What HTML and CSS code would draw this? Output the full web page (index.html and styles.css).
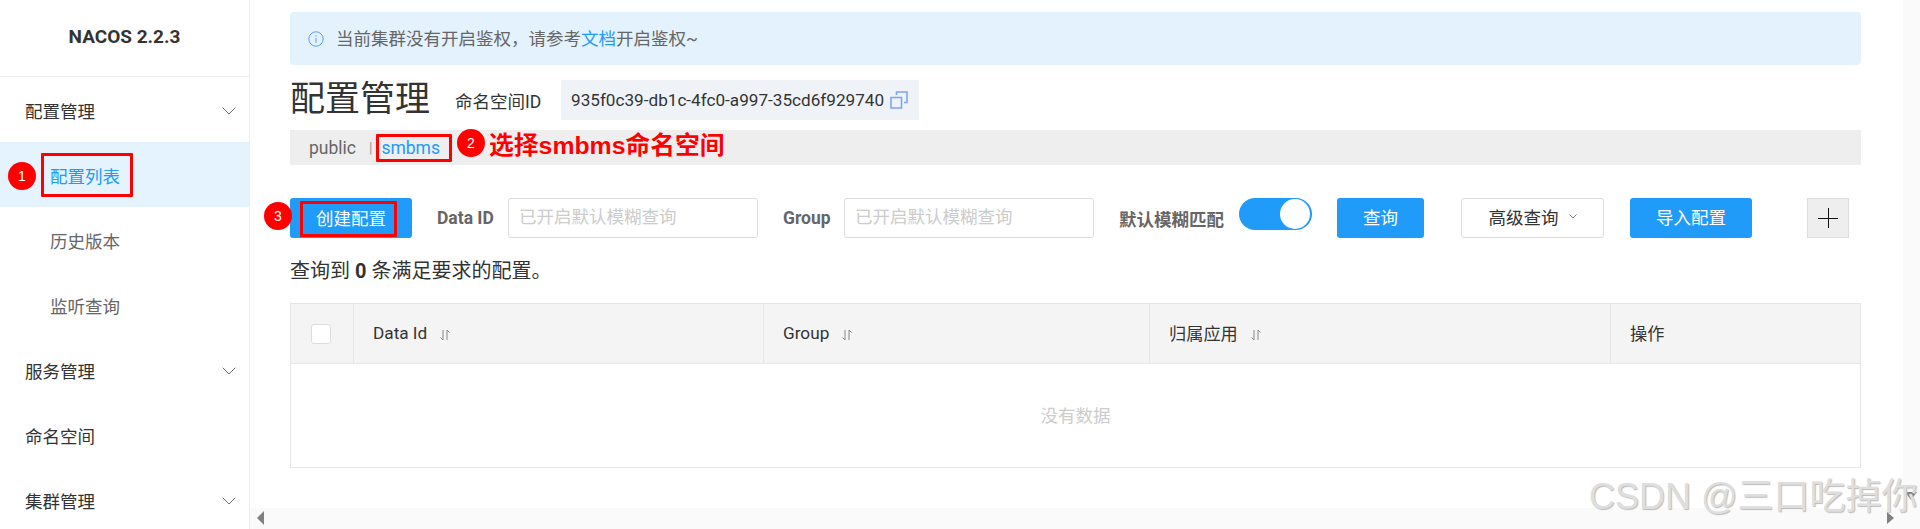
FILE: index.html
```html
<!DOCTYPE html>
<html lang="zh-CN">
<head>
<meta charset="utf-8">
<title>NACOS 2.2.3</title>
<link rel="stylesheet" href="styles.css">
</head>
<body>
<div class="app">
  <aside class="sidebar">
    <div class="brand">NACOS 2.2.3</div>
    <nav class="menu">
      <div class="menu-item"><span>配置管理</span><svg class="chev" viewBox="0 0 14 8"><path d="M.7.7 7 7 13.3.7"/></svg></div>
      <div class="menu-item sub active"><span class="mark-box nav-box">配置列表</span><span class="badge badge-nav">1</span></div>
      <div class="menu-item sub">历史版本</div>
      <div class="menu-item sub">监听查询</div>
      <div class="menu-item"><span>服务管理</span><svg class="chev" viewBox="0 0 14 8"><path d="M.7.7 7 7 13.3.7"/></svg></div>
      <div class="menu-item"><span>命名空间</span></div>
      <div class="menu-item"><span>集群管理</span><svg class="chev" viewBox="0 0 14 8"><path d="M.7.7 7 7 13.3.7"/></svg></div>
    </nav>
  </aside>

  <main class="main">
    <div class="notice">
      <svg class="info" viewBox="0 0 16 16"><circle cx="8" cy="8" r="7.2"/><path d="M8 4.2v1.4M8 7v5"/></svg>
      <span class="notice-text">当前集群没有开启鉴权，请参考<a class="link">文档</a>开启鉴权~</span>
    </div>

    <div class="title-row">
      <h1 class="title">配置管理</h1>
      <span class="ns-label">命名空间ID</span>
      <div class="ns-id">
        <span>935f0c39-db1c-4fc0-a997-35cd6f929740</span>
        <svg class="copy" viewBox="0 0 18 18"><path d="M1 6.500h10.500V17H1zM6.500 4V1H17v10.500h-3"/></svg>
      </div>
    </div>

    <div class="tabs">
      <span class="tab">public</span>
      <span class="tab-sep">|</span>
      <span class="mark-box tab-box">smbms</span>
      <span class="badge badge-tab">2</span>
      <span class="callout">选择smbms命名空间</span>
    </div>

    <div class="toolbar">
      <button class="btn primary create"><span class="btn-text mark-box create-box">创建配置</span><span class="badge badge-create">3</span></button>
      <label class="field-label label-id">Data ID</label>
      <div class="input">已开启默认模糊查询</div>
      <label class="field-label label-group">Group</label>
      <div class="input">已开启默认模糊查询</div>
      <label class="field-label label-fuzzy">默认模糊匹配</label>
      <div class="switch"><span class="knob"></span></div>
      <button class="btn primary query"><span class="btn-text">查询</span></button>
      <button class="btn normal advanced"><span class="btn-text">高级查询</span><svg class="mini-chev" viewBox="0 0 8 5"><path d="M.5.5 4 4 7.500.5"/></svg></button>
      <button class="btn primary import"><span class="btn-text">导入配置</span></button>
      <button class="plus"><svg viewBox="0 0 20 20"><path d="M10.500 0v20M0 10.500h20"/></svg></button>
    </div>

    <p class="result">查询到 <strong>0</strong> 条满足要求的配置。</p>

    <div class="table">
      <div class="thead">
        <div class="th th-check"><span class="checkbox"></span></div>
        <div class="th">Data Id<svg class="sort" viewBox="0 0 12 12"><path d="M4 1v10L1.500 8.500M8 11V1l2.500 2.500"/></svg></div>
        <div class="th">Group<svg class="sort" viewBox="0 0 12 12"><path d="M4 1v10L1.500 8.500M8 11V1l2.500 2.500"/></svg></div>
        <div class="th">归属应用<svg class="sort" viewBox="0 0 12 12"><path d="M4 1v10L1.500 8.500M8 11V1l2.500 2.500"/></svg></div>
        <div class="th">操作</div>
      </div>
      <div class="empty">没有数据</div>
    </div>

    <div class="hscroll"><span class="arrow-left"></span><span class="arrow-right"></span></div>
  </main>
  <div class="vscroll"><span class="arrow-down"></span></div>
  <div class="watermark">CSDN @三口吃掉你</div>
</div>
</body>
</html>
```
FILE: styles.css
```css
* { box-sizing: border-box; }
html, body { margin: 0; padding: 0; background: #fff; }
body {
  width: 1920px; height: 529px; overflow: hidden;
  font-family: Roboto, "Noto Sans CJK SC", sans-serif;
  font-size: 17.5px; color: #333;
}
.app { position: relative; display: flex; width: 1920px; height: 529px; overflow: hidden; }

.sidebar { width: 250px; flex: none; border-right: 1px solid #eee; height: 529px; overflow: hidden; }
.brand {
  height: 77px; border-bottom: 1px solid #eee;
  display: flex; align-items: center; justify-content: center;
  font-size: 19px; font-weight: 700; padding-bottom: 3px;
}
.menu-item {
  position: relative; height: 65px; padding: 2px 13px 0 25px;
  display: flex; align-items: center; justify-content: space-between; color: #333; white-space: nowrap;
}
.menu-item.sub { padding-left: 50px; color: #666; justify-content: flex-start; }
.menu-item.active { background: #e4f3fe; color: #209bfa; }
.chev { width: 14px; height: 8px; fill: none; stroke: #6b6f73; stroke-width: 1; }

.mark-box { position: relative; }
.mark-box::after {
  content: ""; position: absolute; border: 3px solid #f00; border-radius: 1px; pointer-events: none;
}
.nav-box::after { left: -9px; right: -13px; top: -10px; bottom: -9px; }
.tab-box::after { left: -5px; right: -12px; top: -4px; bottom: -4px; }
.create-box::after { left: -16px; right: -11px; top: -8px; bottom: -8px; }

.badge {
  position: absolute; width: 28px; height: 28px; border-radius: 50%;
  background: #f00; color: #fff; font: 400 14px/28px "Liberation Sans", sans-serif; text-align: center;
}
.badge-nav { left: 8px; top: 20px; }
.badge-tab { left: 167px; top: -1px; }
.badge-create { left: -26px; top: 4px; }

.main { position: relative; flex: 1; min-width: 0; padding: 12px 42px 0 40px; }
.notice {
  height: 53px; background: #e3f2fd; border-radius: 4px; padding: 0 18px;
  display: flex; align-items: center; gap: 12px; color: #666; white-space: nowrap;
}
.notice-text { position: relative; top: -1px; }
.info { width: 16px; height: 16px; fill: none; stroke: #5c9cf5; stroke-width: 1; }
.link { color: #209bfa; }

.title-row { display: flex; align-items: center; height: 40px; margin-top: 15px; white-space: nowrap; }
.title { margin: 0; font-size: 35px; font-weight: 400; line-height: 40px; width: 165px; color: #333; flex: none; }
.ns-label { width: 106px; font-size: 17.5px; flex: none; }
.ns-id {
  height: 40px; width: 358px; background: #eff3f8; padding: 0 10px;
  display: flex; align-items: center; gap: 6px; font-size: 17.15px; flex: none;
}
.copy { width: 18px; height: 18px; fill: none; stroke: #7ba4f8; stroke-width: 1.6; flex: none; }

.tabs {
  position: relative; height: 35px; margin-top: 10px; background: #eee;
  display: flex; align-items: center; padding-left: 19px; color: #666; white-space: nowrap; font-size: 17.5px;
}
.tab-sep { margin: 0 9px 0 13px; color: #999; font-size: 14px; }
.tab-box { color: #209bfa; }
.callout {
  position: absolute; left: 199px; top: 0;
  color: #f00; font: 700 24.8px/32px "Liberation Sans", "Noto Sans CJK SC", sans-serif;
  text-shadow: 0 0 1px #fff;
}

.toolbar { display: flex; align-items: center; height: 40px; margin-top: 33px; white-space: nowrap; }
.btn { height: 40px; border-radius: 3px; font: inherit; padding: 0; flex: none; }
.btn-text { position: relative; top: -2px; }
.primary { background: #209bfa; color: #fff; border: 0; }
.create { position: relative; width: 122px; }
.create-box { top: -1px; }
.query { width: 87px; margin-left: 25px; }
.import { width: 122px; margin-left: 26px; }
.normal { background: #fff; border: 1px solid #ddd; color: #333; }
.advanced { width: 143px; margin-left: 37px; display: flex; align-items: center; justify-content: center; gap: 10px; }
.mini-chev { width: 8px; height: 5px; fill: none; stroke: #777; stroke-width: 1; margin-top: -3px; }
.plus { width: 42px; height: 40px; margin-left: 55px; padding: 9px 10px; background: #eee; border: 1px solid #ddd; flex: none; }
.plus svg { display: block; width: 20px; height: 20px; fill: none; stroke: #111; stroke-width: 1; }
.field-label { font-weight: 700; color: #666; font-size: 17.5px; flex: none; }
.label-id { width: 71px; margin-left: 25px; }
.label-group { width: 61px; margin-left: 25px; }
.label-fuzzy { width: 106px; margin-left: 25px; }
.input {
  width: 250px; height: 40px; border: 1px solid #ddd; border-radius: 3px; flex: none;
  padding: 0 10px; line-height: 36px; color: #ccc;
}
.switch { position: relative; width: 73px; height: 32px; margin-top: -8px; margin-left: 14px; border-radius: 16px; background: #209bfa; flex: none; }
.knob { position: absolute; right: 2px; top: 1px; width: 30px; height: 30px; border-radius: 50%; background: #fff; }

.result { margin: 0; height: 30px; margin-top: 18px; line-height: 30px; font-size: 20px; color: #333; }

.table { margin-top: 17px; border: 1px solid #e6e6e6; height: 165px; }
.thead { display: grid; grid-template-columns: 62px 410px 386px 461px 1fr; height: 60px; background: #f4f4f4; border-bottom: 1px solid #e6e6e6; font-size: 17.2px; }
.th { display: flex; align-items: center; padding-left: 19px; border-left: 1px solid #e6e6e6; padding-bottom: 2px; }
.th-check { border-left: 0; padding: 0 2px 0 0; justify-content: center; }
.checkbox { width: 20px; height: 20px; background: #fff; border: 1px solid #ddd; border-radius: 3px; }
.sort { width: 12px; height: 12px; margin-left: 12px; margin-top: 4px; fill: none; stroke: #888; stroke-width: 1; }
.empty { height: 104px; padding-bottom: 4px; display: flex; align-items: center; justify-content: center; color: #ccc; }

.hscroll { position: absolute; left: 0; right: 0; bottom: 0; height: 21px; background: #fafafa; }
.arrow-left { position: absolute; left: 7px; top: 3px; border: 7px solid transparent; border-left: 0; border-right-color: #808080; }
.arrow-right { position: absolute; right: 9px; top: 4px; border: 6px solid transparent; border-right: 0; border-left-width: 7px; border-left-color: #808080; }
.vscroll { width: 17px; flex: none; background: #fafafa; position: relative; }
.arrow-down { position: absolute; left: 2px; top: 492px; border: 6px solid transparent; border-bottom: 0; border-top-width: 8px; border-top-color: #808080; }
.watermark {
  position: absolute; left: 1589px; top: 476px; white-space: nowrap;
  font: 400 36px/42px "Liberation Sans", "Noto Sans CJK SC", sans-serif; color: #dedede;
  text-shadow: 1px 1px 1px #bbb;
}
```
